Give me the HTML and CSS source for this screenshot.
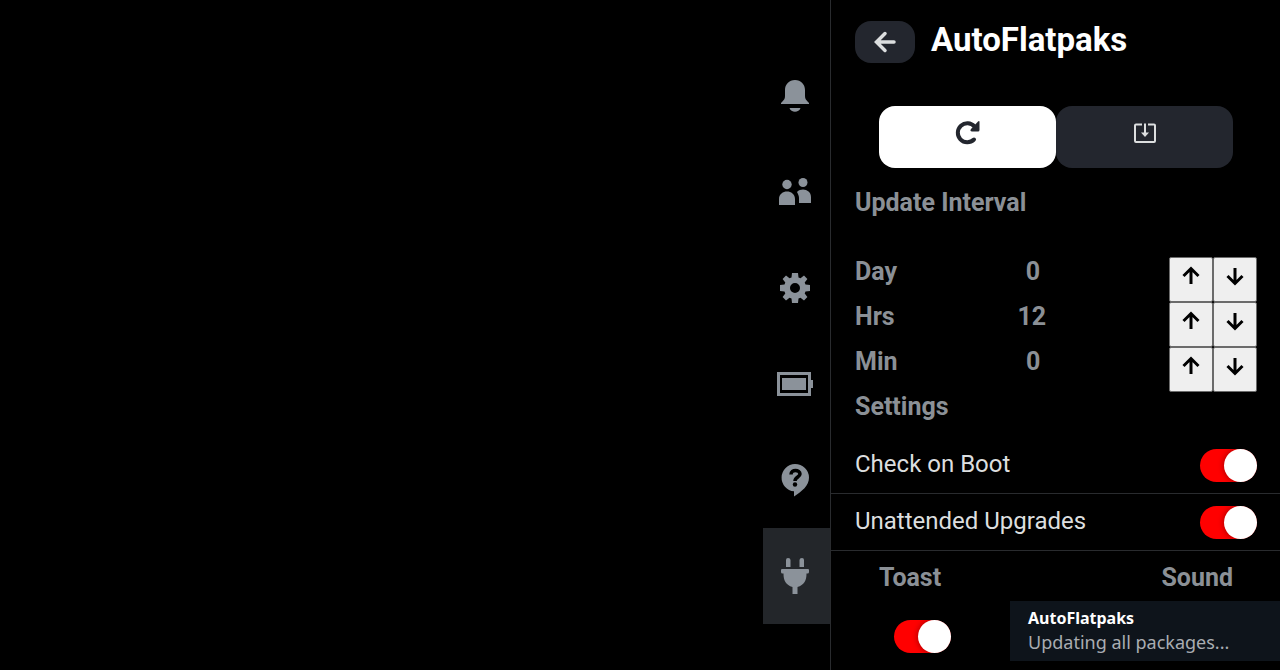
FILE: index.html
```html
<!DOCTYPE html>
<html lang="en">
<head>
    <meta charset="UTF-8">
    <meta name="viewport" content="width=device-width, initial-scale=1.0">
    <title>AutoFlatpaks</title>
    <link rel="stylesheet" href="styles.css">
</head>
<body>
    <nav class="tabs">
        <button class="tab" aria-label="Notifications">
            <svg width="36" height="36" viewBox="0 0 36 36"><path d="M18 2C12 2 8 6.500 8 12V18C8 21 7 22 4 25V26H32V25C29 22 28 21 28 18V12C28 6.500 24 2 18 2ZM12.500 30H23.500C22 35 14 35 12.500 30Z"/></svg>
        </button>
        <button class="tab" aria-label="Friends">
            <svg width="36" height="36" viewBox="0 0 36 36"><circle cx="10" cy="10.500" r="4.700"/><circle cx="26" cy="8.500" r="4.500"/><path d="M2 31V25C2 15 18 15 18 25V31ZM20 18C25 13 34 16 34 23V29H22V24C22 22 21 20 20 18Z"/></svg>
        </button>
        <button class="tab" aria-label="Settings">
            <svg width="36" height="36" viewBox="0 0 36 36"><path fill-rule="evenodd" d="M15 3H21L21.500 7.500L23.500 8.300L27 5.600L30.400 9L27.700 12.500L28.500 14.500L33 15V21L28.500 21.500L27.700 23.500L30.400 27L27 30.400L23.500 27.700L21.500 28.500L21 33H15L14.500 28.500L12.500 27.700L9 30.400L5.600 27L8.300 23.500L7.500 21.500L3 21V15L7.500 14.500L8.300 12.500L5.600 9L9 5.600L12.500 8.300L14.500 7.500ZM18 13A5 5 0 1 0 18 23A5 5 0 1 0 18 13Z"/></svg>
        </button>
        <button class="tab" aria-label="Performance">
            <svg width="36" height="36" viewBox="0 0 36 36"><path fill-rule="evenodd" d="M0 6H34V14H36V22H34V30H0ZM3 9V27H31V9ZM5 12H29V24H5Z"/></svg>
        </button>
        <button class="tab" aria-label="Help">
            <svg width="36" height="36" viewBox="0 0 36 36"><path d="M18 2A14 13.500 0 0 1 32 15.500C32 24 25 29 17 34.500V29.300A14 13.700 0 0 1 18 2Z"/><path class="cut-line" d="M14 12.500C14 7 23 7.500 23 12C23 15 18 15 18 19"/><circle class="cut" cx="18" cy="22.500" r="2.200"/></svg>
        </button>
        <button class="tab active" aria-label="Plugins">
            <svg width="36" height="36" viewBox="0 0 36 36"><path d="M9 9V2Q9 0 11 0Q13.500 0 13.500 2V9ZM22.500 9V2Q22.500 0 25 0Q27 0 27 2V9ZM5 11H31Q32 11 32 12V14Q32 15.500 30.500 15.500H29.500C29.500 23 27 27 20.500 29V36H15.500V29C9 27 6.500 23 6.500 15.500H5.500Q4 15.500 4 14V12Q4 11 5 11Z"/></svg>
        </button>
    </nav>

    <main class="panel">
        <header class="header">
            <button class="back" aria-label="Back">
                <svg width="24" height="24" viewBox="0 0 24 24"><path d="M21 12H4M12 3.500L3.500 12L12 20.500"/></svg>
            </button>
            <h1>AutoFlatpaks</h1>
        </header>

        <div class="actions">
            <button class="action primary" aria-label="Check for updates">
                <svg width="28" height="28" viewBox="0 0 28 28"><path class="arc" d="M20 20.500A9.500 9.500 0 1 1 20.500 7.500"/><path class="tip" d="M25.500 2.500V11Q25.500 12.500 24 12.500H18Q15.500 12 17 10L24 2.500Q25 1.500 25.500 2.500Z"/></svg>
            </button>
            <button class="action" aria-label="Install updates">
                <svg width="24" height="24" viewBox="0 0 24 24"><path class="box" d="M9 3.500H3Q2 3.500 2 4.500V20Q2 21 3 21H21Q22 21 22 20V4.500Q22 3.500 21 3.500H15M12 2.500V13"/><path class="tip" d="M8 11.500H16L12 16Z"/></svg>
            </button>
        </div>

        <h2 class="title">Update Interval</h2>

        <div class="interval">
            <span>Day</span>
            <output>0</output>
            <div class="steps">
                <button aria-label="More days"><svg width="20" height="20" viewBox="0 0 20 20"><path d="M10 18V3M2.500 10L10 2.500L17.500 10"/></svg></button>
                <button aria-label="Fewer days"><svg width="20" height="20" viewBox="0 0 20 20"><path d="M10 2V17M2.500 10L10 17.500L17.500 10"/></svg></button>
            </div>
        </div>
        <div class="interval">
            <span>Hrs</span>
            <output>12</output>
            <div class="steps">
                <button aria-label="More hours"><svg width="20" height="20" viewBox="0 0 20 20"><path d="M10 18V3M2.500 10L10 2.500L17.500 10"/></svg></button>
                <button aria-label="Fewer hours"><svg width="20" height="20" viewBox="0 0 20 20"><path d="M10 2V17M2.500 10L10 17.500L17.500 10"/></svg></button>
            </div>
        </div>
        <div class="interval">
            <span>Min</span>
            <output>0</output>
            <div class="steps">
                <button aria-label="More minutes"><svg width="20" height="20" viewBox="0 0 20 20"><path d="M10 18V3M2.500 10L10 2.500L17.500 10"/></svg></button>
                <button aria-label="Fewer minutes"><svg width="20" height="20" viewBox="0 0 20 20"><path d="M10 2V17M2.500 10L10 17.500L17.500 10"/></svg></button>
            </div>
        </div>

        <h2 class="title settings">Settings</h2>

        <div class="field">
            <label for="boot">Check on Boot</label>
            <input class="toggle" type="checkbox" id="boot" checked>
        </div>
        <div class="field">
            <label for="unattended">Unattended Upgrades</label>
            <input class="toggle" type="checkbox" id="unattended" checked>
        </div>

        <div class="notify">
            <div class="notify-item">
                <label for="toast">Toast</label>
                <input class="toggle" type="checkbox" id="toast" checked>
            </div>
            <div class="notify-item">
                <span>Sound</span>
            </div>
        </div>
    </main>

    <div class="toast" role="status">
        <strong>AutoFlatpaks</strong>
        <p>Updating all packages...</p>
    </div>
</body>
</html>
```
FILE: styles.css
```css
* {
    box-sizing: border-box;
}

body {
    display: flex;
    justify-content: flex-end;
    min-height: 100vh;
    margin: 0;
    background-color: #000;
    color: #8b9096;
    font-family: Roboto, "Liberation Sans", sans-serif;
    font-size: 25px;
    line-height: 30px;
}

button {
    display: flex;
    justify-content: center;
    align-items: center;
    padding: 0;
    border: none;
    cursor: pointer;
}

h1,
h2,
p {
    margin: 0;
}

.tabs {
    display: flex;
    flex-direction: column;
    width: 67px;
    padding-top: 48px;
}

.tab {
    height: 96px;
    padding-right: 3px;
    background-color: transparent;
    fill: #8b929a;
}

.tab.active {
    background-color: #23262a;
}

.cut {
    fill: #000;
}

.cut-line {
    fill: none;
    stroke: #000;
    stroke-width: 3.5;
}

.panel {
    width: 450px;
    border-left: 1px solid #292b2e;
}

.header {
    display: flex;
    gap: 16px;
    padding: 21px 24px 0;
}

.header h1 {
    color: #fff;
    font-size: 33px;
    line-height: 38px;
}

.back {
    width: 60px;
    height: 42px;
    border-radius: 16px;
    background-color: #23262e;
}

.back path {
    fill: none;
    stroke: #dcdedf;
    stroke-width: 3.5;
    stroke-linecap: round;
}

.actions {
    display: flex;
    padding: 43px 47px 0 48px;
}

.action {
    flex: 1;
    height: 62px;
    padding-bottom: 8px;
    border-radius: 16px;
    background-color: #23262e;
}

.action.primary {
    background-color: #fff;
}

.arc {
    fill: none;
    stroke: #23262e;
    stroke-width: 4;
    stroke-linecap: round;
}

.box {
    fill: none;
    stroke: #dcdedf;
    stroke-width: 2;
}

.tip {
    fill: #dcdedf;
}

.primary .tip {
    fill: #23262e;
}

.title {
    padding: 20px 24px 39px;
    font-size: 25px;
    line-height: 30px;
}

.title.settings {
    padding: 0 24px 15px;
}

.interval {
    display: flex;
    justify-content: space-between;
    padding: 0 23px 0 24px;
    font-weight: bold;
}

.steps {
    display: flex;
}

.steps button {
    width: 44px;
    height: 45px;
    padding-bottom: 7px;
    border: 1px solid #6b6b6b;
    border-radius: 2px;
    background-color: #efefef;
}

.steps path {
    fill: none;
    stroke: #000;
    stroke-width: 3;
}

.field {
    display: flex;
    justify-content: space-between;
    padding: 12px 23px 11px 24px;
    border-bottom: 1px solid #292b2e;
    color: #dcdedf;
    font-size: 24px;
}

.toggle {
    display: flex;
    width: 57px;
    height: 33px;
    margin: 0;
    border-radius: 17px;
    background-color: #f00;
    appearance: none;
    cursor: pointer;
}

.toggle::before {
    content: "";
    width: 33px;
    height: 33px;
    border-radius: 50%;
    background-color: #fff;
    box-shadow: 0 0 6px rgba(0, 0, 0, 0.4);
}

.toggle:checked::before {
    margin-left: auto;
}

.notify {
    display: flex;
    justify-content: space-between;
    padding: 12px 47px 0 48px;
    font-weight: bold;
}

.notify-item {
    display: flex;
    flex-direction: column;
    align-items: flex-end;
    gap: 27px;
}

.notify-item .toggle {
    margin-right: -10px;
}

.toast {
    position: absolute;
    right: 0;
    bottom: 9px;
    width: 270px;
    padding: 5px 18px 7px;
    background-color: #0e141b;
    color: #a9adb2;
    font-family: "Noto Sans", sans-serif;
    font-size: 18px;
    line-height: 24px;
}

.toast strong {
    display: block;
    color: #fff;
    font-size: 16px;
}
```
